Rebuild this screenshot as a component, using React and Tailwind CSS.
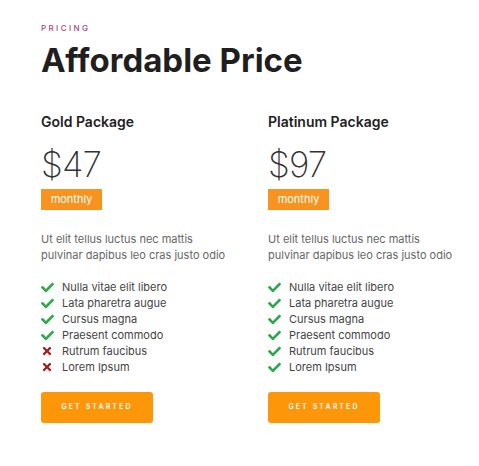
import React from "react";
import { FaCheck, FaTimes } from "react-icons/fa";

const plans = [
    {
        name: "Gold Package",
        price: "47",
        features: [
            ["Nulla vitae elit libero", true],
            ["Lata pharetra augue", true],
            ["Cursus magna", true],
            ["Praesent commodo", true],
            ["Rutrum faucibus", false],
            ["Lorem Ipsum", false],
        ],
    },
    {
        name: "Platinum Package",
        price: "97",
        features: [
            ["Nulla vitae elit libero", true],
            ["Lata pharetra augue", true],
            ["Cursus magna", true],
            ["Praesent commodo", true],
            ["Rutrum faucibus", true],
            ["Lorem Ipsum", true],
        ],
    },
];

function PlanCard({ plan }) {
    return (
        <div className="flex flex-col">
            <h3 className="text-[14px] font-semibold text-[#222] leading-none">{plan.name}</h3>

            {/* Price */}
            <div className="mt-[18px] text-[35px] font-extralight text-[#333] leading-none tracking-tight">
                ${plan.price}
            </div>
            <div className="mt-[7px] w-[61px] h-[21px] bg-[#f7931e] text-white text-[11px] flex items-center justify-center">
                monthly
            </div>

            <p className="mt-[21px] text-[11px] leading-[16px] text-[#666]">
                Ut elit tellus luctus nec mattis
                <br />
                pulvinar dapibus leo cras justo odio
            </p>

            {/* Features */}
            <ul className="mt-[16px] flex flex-col">
                {plan.features.map(([label, ok]) => (
                    <li key={label} className="flex items-center h-[16px] text-[11px] text-[#444]">
                        <span className="w-[21px] flex items-center">
                            {ok ? (
                                <FaCheck className="w-[13px] h-[13px] text-[#2fa84f]" />
                            ) : (
                                <FaTimes className="w-[12px] h-[12px] text-[#a31c1c]" />
                            )}
                        </span>
                        {label}
                    </li>
                ))}
            </ul>

            <button className="mt-[17px] w-[112px] h-[31px] rounded-[3px] bg-[#fd9608] text-white text-[7px] font-semibold tracking-[0.3em]">
                GET STARTED
            </button>
        </div>
    );
}

export default function App() {
    return (
        <div className="min-h-screen bg-white pl-[41px] pt-[24px] font-['Inter','Liberation_Sans',sans-serif]">
            <div className="text-[8px] font-medium tracking-[0.3em] text-[#a9467a] leading-none">PRICING</div>
            <h1 className="mt-[12px] text-[33px] font-bold text-[#1f1f1f] leading-none">
                Affordable Price
            </h1>

            <div className="mt-[38px] grid grid-cols-[227px_227px]">
                {plans.map((p) => (
                    <PlanCard key={p.name} plan={p} />
                ))}
            </div>
        </div>
    );
}
